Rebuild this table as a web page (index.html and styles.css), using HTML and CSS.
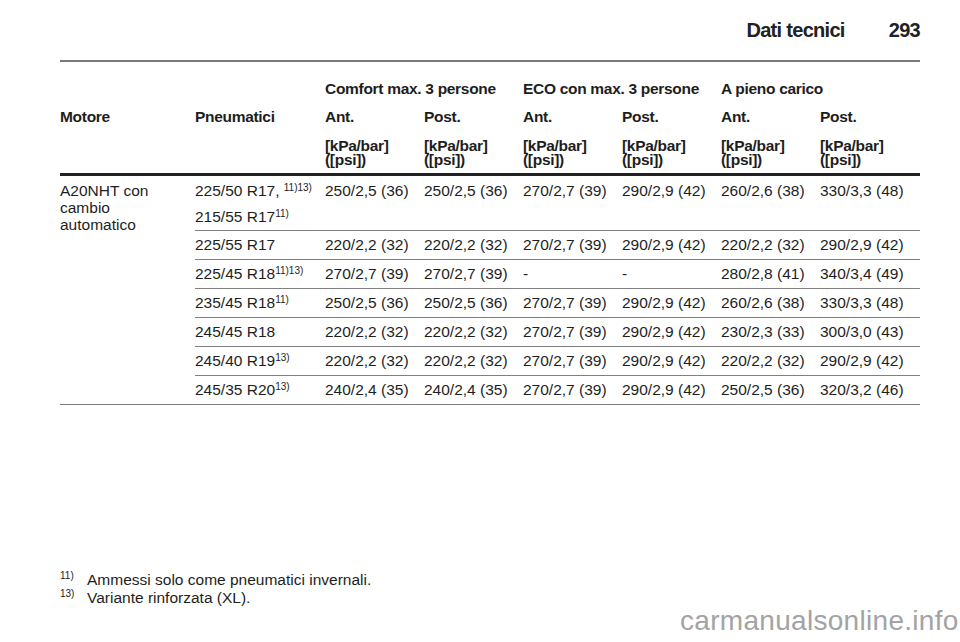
FILE: index.html
```html
<!DOCTYPE html>
<html lang="it">
<head>
<meta charset="utf-8">
<title>Dati tecnici 293</title>
<link rel="stylesheet" href="styles.css">
</head>
<body>
<div class="page">
  <header class="page-head">
    <span class="page-title">Dati tecnici</span>
    <span class="page-num">293</span>
  </header>
  <table class="tyres">
    <colgroup>
      <col class="c-motor"><col class="c-tyre">
      <col class="c-val"><col class="c-val"><col class="c-val"><col class="c-val"><col class="c-val"><col class="c-last">
    </colgroup>
    <thead>
      <tr class="h-group">
        <th></th><th></th>
        <th colspan="2">Comfort max. 3 persone</th>
        <th colspan="2">ECO con max. 3 persone</th>
        <th colspan="2">A pieno carico</th>
      </tr>
      <tr class="h-side">
        <th>Motore</th><th>Pneumatici</th>
        <th>Ant.</th><th>Post.</th><th>Ant.</th><th>Post.</th><th>Ant.</th><th>Post.</th>
      </tr>
      <tr class="h-unit">
        <th></th><th></th>
        <th>[kPa/bar]<br>([psi])</th><th>[kPa/bar]<br>([psi])</th><th>[kPa/bar]<br>([psi])</th><th>[kPa/bar]<br>([psi])</th><th>[kPa/bar]<br>([psi])</th><th>[kPa/bar]<br>([psi])</th>
      </tr>
    </thead>
    <tbody>
      <tr class="r-first">
        <td class="motor" rowspan="7">A20NHT con<br>cambio<br>automatico</td>
        <td><div>225/50 R17, <sup>11)13)</sup></div><div class="alt">215/55 R17<sup>11)</sup></div></td>
        <td>250/2,5 (36)</td><td>250/2,5 (36)</td><td>270/2,7 (39)</td><td>290/2,9 (42)</td><td>260/2,6 (38)</td><td>330/3,3 (48)</td>
      </tr>
      <tr>
        <td>225/55 R17</td>
        <td>220/2,2 (32)</td><td>220/2,2 (32)</td><td>270/2,7 (39)</td><td>290/2,9 (42)</td><td>220/2,2 (32)</td><td>290/2,9 (42)</td>
      </tr>
      <tr>
        <td>225/45 R18<sup>11)13)</sup></td>
        <td>270/2,7 (39)</td><td>270/2,7 (39)</td><td>-</td><td>-</td><td>280/2,8 (41)</td><td>340/3,4 (49)</td>
      </tr>
      <tr>
        <td>235/45 R18<sup>11)</sup></td>
        <td>250/2,5 (36)</td><td>250/2,5 (36)</td><td>270/2,7 (39)</td><td>290/2,9 (42)</td><td>260/2,6 (38)</td><td>330/3,3 (48)</td>
      </tr>
      <tr>
        <td>245/45 R18</td>
        <td>220/2,2 (32)</td><td>220/2,2 (32)</td><td>270/2,7 (39)</td><td>290/2,9 (42)</td><td>230/2,3 (33)</td><td>300/3,0 (43)</td>
      </tr>
      <tr>
        <td>245/40 R19<sup>13)</sup></td>
        <td>220/2,2 (32)</td><td>220/2,2 (32)</td><td>270/2,7 (39)</td><td>290/2,9 (42)</td><td>220/2,2 (32)</td><td>290/2,9 (42)</td>
      </tr>
      <tr>
        <td>245/35 R20<sup>13)</sup></td>
        <td>240/2,4 (35)</td><td>240/2,4 (35)</td><td>270/2,7 (39)</td><td>290/2,9 (42)</td><td>250/2,5 (36)</td><td>320/3,2 (46)</td>
      </tr>
    </tbody>
  </table>
  <ol class="notes">
    <li><span class="note-mark">11)</span><span>Ammessi solo come pneumatici invernali.</span></li>
    <li><span class="note-mark">13)</span><span>Variante rinforzata (XL).</span></li>
  </ol>
  <div class="watermark">carmanualsonline.info</div>
</div>
</body>
</html>
```
FILE: styles.css
```css
html, body {
  margin: 0;
  padding: 0;
  background: #ffffff;
}

.page {
  position: relative;
  width: 960px;
  height: 642px;
  overflow: hidden;
  box-sizing: border-box;
  padding: 18px 40px 0 60px;
  font-family: "Liberation Sans", Arial, sans-serif;
  color: #1e1e1e;
  font-size: 15.5px;
  line-height: 18px;
}

.page-head {
  display: flex;
  justify-content: flex-end;
  gap: 44px;
  height: 24px;
  padding-bottom: 18px;
  border-bottom: 2px solid #7a7a7a;
  font-weight: bold;
  font-size: 20px;
  line-height: 24px;
  letter-spacing: -0.7px;
  color: #222;
}

.tyres {
  width: 860px;
  border-collapse: collapse;
  table-layout: fixed;
}

.c-motor { width: 135px; }
.c-tyre { width: 130px; }
.c-val { width: 99px; }
.c-last { width: 100px; }

.tyres th,
.tyres td {
  padding: 0;
  text-align: left;
  vertical-align: top;
  white-space: nowrap;
}

.tyres th {
  font-weight: bold;
  letter-spacing: -0.3px;
}

.h-group th { padding-top: 18px; }
.h-side th { padding-top: 10px; }
.h-unit th {
  padding-top: 13px;
  padding-bottom: 6px;
  line-height: 14px;
  border-bottom: 3px solid #222;
}

.tyres td {
  padding: 5px 0;
  border-top: 1.5px solid #808080;
}

.tyres .r-first td {
  border-top: none;
  padding-top: 6px;
  padding-bottom: 4px;
}

.tyres td.motor {
  line-height: 17px;
  white-space: normal;
  border-bottom: 1.5px solid #808080;
}

.tyres tbody tr:last-child td {
  border-bottom: 1.5px solid #808080;
}

.alt { margin-top: 8px; }

sup {
  font-size: 10px;
  line-height: 0;
  vertical-align: 5px;
}

.notes {
  list-style: none;
  margin: 166px 0 0 0;
  padding: 0;
  line-height: 18px;
}

.notes li {
  display: grid;
  grid-template-columns: 27px auto;
}

.note-mark {
  font-size: 10px;
  position: relative;
  top: -4px;
}

.watermark {
  position: absolute;
  left: 680px;
  top: 606px;
  font-size: 28px;
  line-height: 30px;
  letter-spacing: 0.3px;
  color: #a3a3a3;
  white-space: nowrap;
}
```
